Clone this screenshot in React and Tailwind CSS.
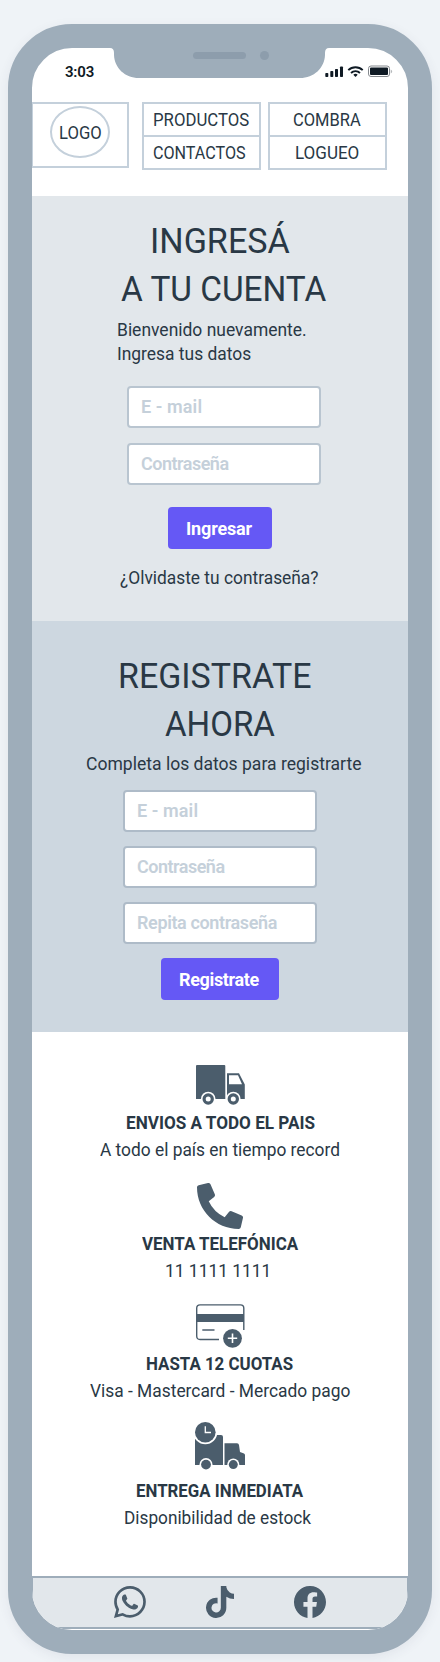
import React from 'react';
import { BsWhatsapp, BsFacebook } from 'react-icons/bs';
import { FaPhoneAlt, FaTiktok } from 'react-icons/fa';

function Text({ className, children }) {
  return <p className={`h-6 origin-left whitespace-nowrap leading-6 ${className}`}>{children}</p>;
}

function Title({ className, children }) {
  return (
    <h2 className={`h-12 origin-left whitespace-nowrap text-[35px] font-normal leading-[48px] ${className}`}>
      {children}
    </h2>
  );
}

function Field({ className, placeholder }) {
  return (
    <input
      placeholder={placeholder}
      className={`block h-[42px] w-[194px] rounded-[4px] border-2 bg-white pb-[1px] pl-[12px] font-[600] placeholder:text-[#c5d0da] ${className}`}
    />
  );
}

function Button({ className, children }) {
  return (
    <button className={`flex h-[42px] items-center rounded-[4px] bg-[#6558f5] font-bold text-white ${className}`}>
      {children}
    </button>
  );
}

function Notch() {
  return (
    <svg className="absolute left-0 top-[-1px]" width="376" height="31" viewBox="0 -1 376 31">
      <path
        d="M76 -1V0H78Q82 0 82 5V7C82.500 20 93 30 107 30H268C282 30 292.500 20 293 7V5Q293 0 297 0H299V-1Z"
        fill="#9eadba"
      />
      <rect x="161" y="4" width="53" height="7" rx="3.500" fill="#8d9dac" />
      <circle cx="232.500" cy="7.500" r="4.500" fill="#8d9dac" />
    </svg>
  );
}

function StatusIcons() {
  return (
    <svg width="68" height="14" viewBox="0 0 68 14" fill="#0f1a24">
      <rect x="0.300" y="8" width="3" height="4" rx="0.800" />
      <rect x="5.300" y="6" width="3" height="6" rx="0.800" />
      <rect x="10" y="4" width="3" height="8" rx="0.800" />
      <rect x="15" y="1.500" width="3" height="10.500" rx="0.800" />
      <g fill="none" stroke="#0f1a24" strokeWidth="1.900">
        <path d="M23.300 5.200a10.100 10.100 0 0 1 14.400 0" />
        <path d="M26 8a6.400 6.400 0 0 1 9 0" />
      </g>
      <path d="M30.500 12l-2.200-2.200a3.200 3.200 0 0 1 4.400 0z" />
      <rect x="43.500" y="1" width="21" height="10.500" rx="2.500" fill="none" stroke="#85898e" />
      <rect x="45" y="2.500" width="18" height="7.500" rx="1" />
      <path d="M65.700 4.500v4q1.400-.6 1.400-2t-1.400-2z" fill="#b5b8bb" />
    </svg>
  );
}

function TruckIcon({ className }) {
  return (
    <svg className={className} width="50" height="40" viewBox="0 0 50 40" fill="#4b5d6c">
      <path d="M1 0H28.300Q29.300 0 29.300 1V34H0V1Q0 0 1 0Z" />
      <path
        fillRule="evenodd"
        d="M31 34V8.300H43L48.800 19.500V34ZM33 10.300V19.300H46L42 10.300Z"
      />
      <g fill="white">
        <circle cx="12.200" cy="34" r="7.300" />
        <circle cx="37.300" cy="34" r="7.300" />
      </g>
      <g fill="none" stroke="#4b5d6c" strokeWidth="3.200">
        <circle cx="12.200" cy="34" r="4.100" />
        <circle cx="37.300" cy="34" r="4.100" />
      </g>
    </svg>
  );
}

function CardIcon({ className }) {
  return (
    <svg className={className} width="49" height="44" viewBox="0 0 49 44" fill="none" stroke="#4b5d6c">
      <path d="M23 35.500H4Q.7 35.500 .7 32V4.200Q.7 .9 4 .9H44.500Q47.800 .9 47.800 4.200V26" strokeWidth="1.400" />
      <path d="M.5 14H48" strokeWidth="8" />
      <path d="M6.300 26H18.500" strokeWidth="1.500" />
      <circle cx="36.500" cy="34.300" r="9.400" fill="#4b5d6c" stroke="none" />
      <path d="M31.800 34.300H41.200M36.500 29.600V39" stroke="white" strokeWidth="1.600" />
    </svg>
  );
}

function ExpressIcon({ className }) {
  return (
    <svg className={className} width="50" height="48" viewBox="0 0 50 48" fill="#4b5d6c">
      <path d="M0 13H26Q28 13 28 15V43H0Z" />
      <path d="M29.500 43V21.300H42Q43.700 21.300 44 23L45 30L49 31.500Q50 32 50 33V43Z" />
      <g fill="white">
        <circle cx="10.300" cy="10.300" r="12" />
        <circle cx="11" cy="42.600" r="6.500" />
        <circle cx="38.300" cy="42.600" r="6" />
      </g>
      <circle cx="10.300" cy="10.300" r="10.300" />
      <circle cx="11" cy="42.600" r="4.900" />
      <circle cx="38.300" cy="42.600" r="4.500" />
      <path d="M10.300 4.300V10.500H16" fill="none" stroke="white" strokeWidth="1.300" />
    </svg>
  );
}

function Header() {
  return (
    <header className="flex h-[94px] items-start">
      <div className="ml-[-1px] h-[66px] w-[98px] border-2 border-[#c4d0db] pl-[17px] pt-[2px]">
        <div className="h-[52px] w-[60px] rounded-[50%] border-2 border-[#c4d0db] pl-[7px] pt-[13px]">
          <Text className="scale-x-[0.926]">LOGO</Text>
        </div>
      </div>
      <nav className="ml-[13px] flex gap-[7px]">
        <div className="h-[68px] w-[119px] border-2 border-[#c4d0db]">
          <div className="h-[33px] border-b-2 border-[#c4d0db] pl-[9px] pt-1">
            <Text className="scale-x-[0.93]">PRODUCTOS</Text>
          </div>
          <Text className="ml-[9px] mt-1 scale-x-[0.896]">CONTACTOS</Text>
        </div>
        <div className="h-[68px] w-[119px] border-2 border-[#c4d0db]">
          <div className="h-[33px] border-b-2 border-[#c4d0db] pl-[23px] pt-1">
            <Text className="scale-x-[0.917]">COMBRA</Text>
          </div>
          <Text className="ml-[25px] mt-1 scale-x-[0.945]">LOGUEO</Text>
        </div>
      </nav>
    </header>
  );
}

function Login() {
  return (
    <section className="h-[425px] bg-[#e2e7eb] pt-[22px]">
      <Title className="ml-[117.5px] scale-x-[0.975]">INGRESÁ</Title>
      <Title className="ml-[89px] scale-x-[0.953]">A TU CUENTA</Title>
      <Text className="ml-[84.5px] mt-[4px] scale-x-[0.97]">Bienvenido nuevamente.</Text>
      <Text className="ml-[84.5px] scale-x-[0.967]">Ingresa tus datos</Text>
      <Field className="ml-[95px] mt-5 border-[#b9c5d0] tracking-[0.1px]" placeholder="E - mail" />
      <Field className="ml-[95px] mt-[15px] border-[#b9c5d0] tracking-[-0.5px]" placeholder="Contraseña" />
      <Button className="ml-[136px] mt-[22px] w-[104px] pl-[18px] tracking-[-0.17px]">Ingresar</Button>
      <Text className="ml-[88px] mt-[17px] scale-x-[0.964]">¿Olvidaste tu contraseña?</Text>
    </section>
  );
}

function Register() {
  return (
    <section className="h-[411px] bg-[#cdd7e0] pt-[32px]">
      <Title className="ml-[85.5px] scale-x-[0.97]">REGISTRATE</Title>
      <Title className="ml-[132.5px] scale-x-[0.945]">AHORA</Title>
      <Text className="ml-[54px] mt-[3px] scale-x-[0.975]">Completa los datos para registrarte</Text>
      <Field className="ml-[91px] mt-[14px] border-[#aebbc8] tracking-[0.1px]" placeholder="E - mail" />
      <Field className="ml-[91px] mt-[14px] border-[#aebbc8] tracking-[-0.5px]" placeholder="Contraseña" />
      <Field className="ml-[91px] mt-[14px] border-[#aebbc8] tracking-[-0.37px]" placeholder="Repita contraseña" />
      <Button className="ml-[129px] mt-[14px] w-[118px] pl-[18px] tracking-[-0.35px]">Registrate</Button>
    </section>
  );
}

function Benefits() {
  return (
    <section className="h-[544px] pt-[33px]">
      <TruckIcon className="ml-[163.5px]" />
      <Text className="ml-[93.500px] mt-[6px] scale-x-[0.951] font-bold">ENVIOS A TODO EL PAIS</Text>
      <Text className="ml-[68px] mt-[3px] scale-x-[0.963]">A todo el país en tiempo record</Text>
      <FaPhoneAlt className="ml-[165px] mt-[21px] block text-[46px] text-[#4b5d6c]" />
      <Text className="ml-[109.5px] mt-[3px] scale-x-[0.941] font-bold">VENTA TELEFÓNICA</Text>
      <Text className="ml-[133px] mt-[3px] scale-x-[0.966]">11 1111 1111</Text>
      <CardIcon className="ml-[164px] mt-[21px]" />
      <Text className="ml-[114px] mt-1 scale-x-[0.938] font-bold">HASTA 12 CUOTAS</Text>
      <Text className="ml-[58px] mt-[3px] scale-x-[0.965]">Visa - Mastercard - Mercado pago</Text>
      <ExpressIcon className="ml-[163px] mt-[19px]" />
      <Text className="ml-[103.500px] mt-[9px] scale-x-[0.936] font-bold">ENTREGA INMEDIATA</Text>
      <Text className="ml-[91.500px] mt-[3px] scale-x-[0.957]">Disponibilidad de estock</Text>
    </section>
  );
}

function Footer() {
  return (
    <footer className="ml-[-1px] flex h-[53px] w-[378px] items-start gap-[58px] border-2 border-[#9eadba] bg-[#e2e7eb] pl-[81px] pt-2 text-[32px] text-[#4b5d6c]">
      <BsWhatsapp />
      <FaTiktok />
      <BsFacebook />
    </footer>
  );
}

export default function App() {
  return (
    <div className="h-[1662px] w-[440px] overflow-hidden bg-[#eff3f7] pl-2 pt-6 font-['Roboto',sans-serif] text-[18px] text-[#293845]">
      <main className="relative h-[1630px] w-[424px] overflow-hidden rounded-[64px] border-[24px] border-[#9eadba] bg-white shadow-[0_3px_12px_rgba(60,70,90,0.08)]">
        <Notch />
        <div className="flex h-[54px] items-start justify-between pl-[33px] pr-[15px] pt-[17px]">
          <span className="mt-[-3px] text-[15px] font-semibold leading-5 tracking-[-0.2px] text-[#0f1a24]">3:03</span>
          <StatusIcons />
        </div>
        <Header />
        <Login />
        <Register />
        <Benefits />
        <Footer />
      </main>
    </div>
  );
}
